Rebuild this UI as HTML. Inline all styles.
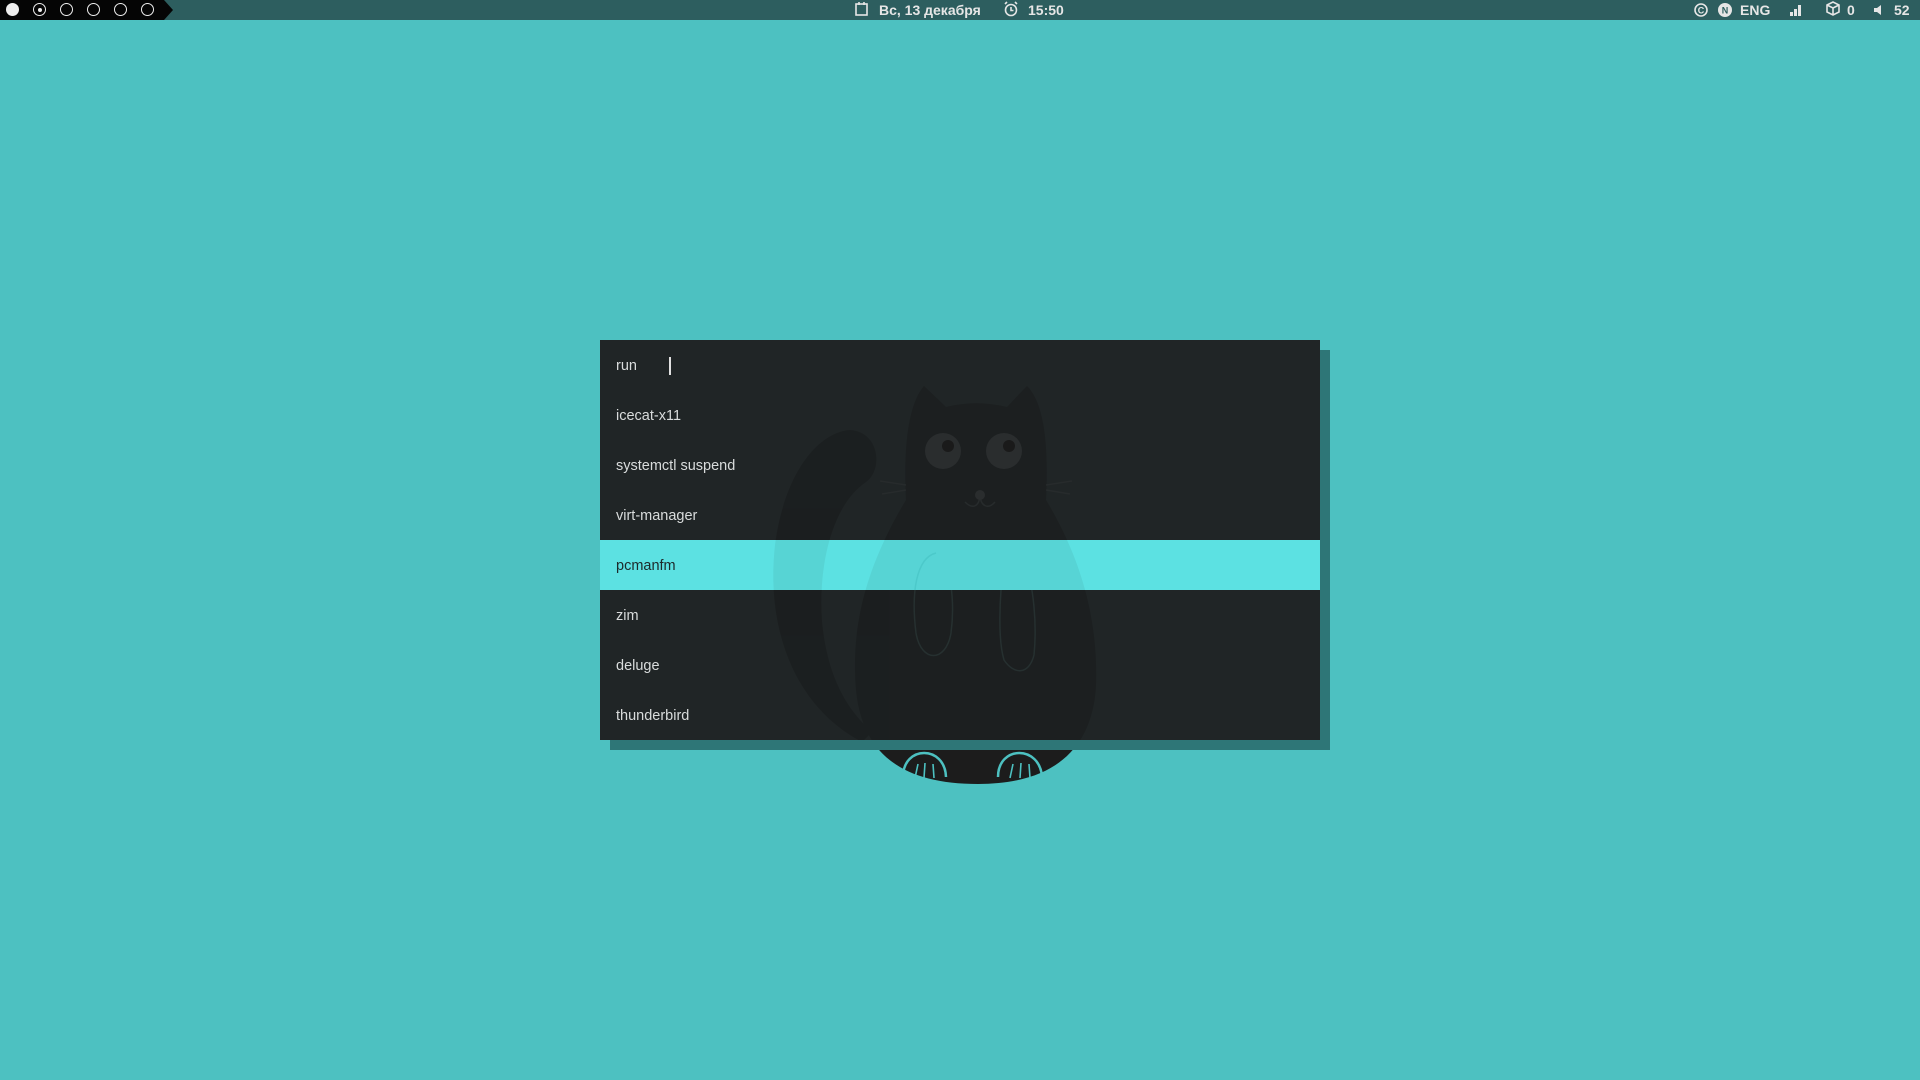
<!DOCTYPE html>
<html><head><meta charset="utf-8"><style>
html,body{margin:0;padding:0;width:1920px;height:1080px;overflow:hidden;background:#4dc1c1;font-family:"Liberation Sans","DejaVu Sans",sans-serif;}
#bar{position:absolute;left:0;top:0;width:1920px;height:20px;background:#2d5e5f;}
#ws{position:absolute;left:0;top:0;height:20px;width:164px;background:#050505;}
#ws:after{content:"";position:absolute;left:164px;top:0;border-left:9px solid #050505;border-top:10px solid transparent;border-bottom:10px solid transparent;}
.c{position:absolute;top:3px;width:11px;height:11px;border:1.6px solid #eee;border-radius:50%;}
.bt{position:absolute;top:0;height:20px;line-height:20px;color:#e6e6e6;font-weight:bold;font-size:14px;}
#box{position:absolute;left:600px;top:340px;width:720px;height:400px;background:#202526;}
#sh{position:absolute;left:610px;top:350px;width:720px;height:400px;background:#2e7677;}
.row{position:absolute;left:0;width:720px;height:50px;line-height:52px;padding-left:16px;box-sizing:border-box;color:#d9dcdc;font-size:14.5px;}
.hl{background:#5ce1e2;color:#1d2a2b;}
svg{position:absolute;left:0;top:0;}
</style></head><body>
<div id="bar">
 <div id="ws">
  <div class="c" style="left:6px;background:#eee;"></div>
  <div class="c" style="left:33px;"><div style="position:absolute;left:3.5px;top:3.5px;width:4px;height:4px;border-radius:50%;background:#eee"></div></div>
  <div class="c" style="left:60px;"></div>
  <div class="c" style="left:87px;"></div>
  <div class="c" style="left:114px;"></div>
  <div class="c" style="left:141px;"></div>
 </div>
 <svg width="1920" height="20" style="left:0;top:0">
  <g fill="none" stroke="#e6e6e6" stroke-width="1.6">
   <rect x="856" y="4" width="11" height="11"/><line x1="859" y1="2" x2="859" y2="5"/><line x1="864" y1="2" x2="864" y2="5"/>
   <circle cx="1011" cy="10" r="5.5"/><path d="M1011 7v3.5h2.5M1005 4l2-2M1017 4l-2-2"/>
   <circle cx="1701" cy="10" r="6"/>
   <path d="M1827 5l6-3 6 3v7l-6 3-6-3zM1827 5l6 3 6-3M1833 8v7"/>
  </g>
  <circle cx="1725" cy="10" r="7" fill="#e6e6e6"/>
  <text x="1701" y="13.5" font-size="9" font-weight="bold" fill="#e6e6e6" text-anchor="middle" font-family="Liberation Sans">C</text>
  <text x="1725" y="13.5" font-size="9" font-weight="bold" fill="#2d5e5f" text-anchor="middle" font-family="Liberation Sans">N</text>
  <g fill="#e6e6e6"><rect x="1790" y="12" width="3" height="4"/><rect x="1794" y="9" width="3" height="7"/><rect x="1798" y="5" width="3" height="11"/></g>
  <path d="M1874 8h3l4-3v10l-4-3h-3z" fill="#e6e6e6"/>
 </svg>
 <div class="bt" style="left:879px;">Вс, 13 декабря</div>
 <div class="bt" style="left:1028px;">15:50</div>
 <div class="bt" style="left:1740px;">ENG</div>
 <div class="bt" style="left:1847px;">0</div>
 <div class="bt" style="left:1894px;">52</div>
</div>

<svg width="1920" height="1080">
 <defs>
  <path id="tail" d="M862 742 C792 705 766 625 775 545 C785 470 820 432 850 430 C880 432 883 470 866 482 C832 505 818 565 822 622 C828 682 850 712 872 732 Z"/>
  <path id="body" d="M906 500 C903 440 910 402 924 386 L946 407 C966 402 986 402 1007 407 L1027 386 C1043 402 1049 440 1046 500 C1082 560 1098 620 1096 685 C1093 745 1058 784 978 784 C900 784 862 752 856 690 C850 620 870 560 906 500 Z"/>
 </defs>
 <g fill="#1c1c1c"><use href="#tail"/><use href="#body"/></g>
 <g fill="none" stroke="#4dc1c1" stroke-width="2.5">
  <path d="M903 777 C903 745 945 745 946 777"/><path d="M998 777 C998 745 1040 745 1042 777"/>
  <path d="M915 778 l3 -14 M924 778 l1 -15 M934 778 l-1 -14 M1010 778 l3 -14 M1020 778 l1 -15 M1030 778 l-1 -14" stroke-width="1.6"/>
 </g>
</svg>
<div id="sh"></div>
<div id="box">
 <div class="row" style="top:0">run<span style="display:inline-block;width:2px;height:18px;background:#e0e0e0;vertical-align:middle;margin-left:32px;"></span></div>
 <div class="row" style="top:50px">icecat-x11</div>
 <div class="row" style="top:100px">systemctl suspend</div>
 <div class="row" style="top:150px">virt-manager</div>
 <div class="row hl" style="top:200px">pcmanfm</div>
 <div class="row" style="top:250px">zim</div>
 <div class="row" style="top:300px">deluge</div>
 <div class="row" style="top:350px">thunderbird</div>
</div>
<svg width="1920" height="1080" style="pointer-events:none">
 <clipPath id="bc1"><rect x="600" y="340" width="720" height="200"/><rect x="600" y="590" width="720" height="150"/></clipPath>
 <clipPath id="bc2"><rect x="600" y="540" width="720" height="50"/></clipPath>
 <g clip-path="url(#bc1)">
  <g fill="#111" opacity="0.28"><use href="#tail"/><use href="#body"/></g>
  <g fill="#2a2d2e"><circle cx="943" cy="451" r="18"/><circle cx="1004" cy="451" r="18"/></g>
  <g fill="#1a1a1a"><circle cx="948" cy="446" r="6"/><circle cx="1009" cy="446" r="6"/></g>
  <g fill="none" stroke="#272b2c" stroke-width="1.5">
   <path d="M965 502 c8 8 14 4 15 -6 c1 10 8 14 15 6"/>
   <path d="M906 485 l-26 -4 M906 490 l-24 4 M1046 485 l26 -4 M1046 490 l24 4"/>
   <path d="M936 553 c-20 5 -25 40 -20 80 c5 30 30 30 35 0 c4 -30 0 -75 -15 -80z" stroke="#263030"/>
   <path d="M1004 560 c-5 40 -6 80 0 100 c10 15 25 15 30 -5 c3 -30 0 -70 -10 -95" stroke="#263030"/>
  </g>
  <circle cx="980" cy="495" r="5" fill="#2a2d2e"/>
 </g>
 <g clip-path="url(#bc2)">
  <g fill="#111" opacity="0.06"><use href="#tail"/><use href="#body"/></g>
  <path d="M936 553 c-20 5 -25 40 -20 80" fill="none" stroke="#4cc9ca" stroke-width="1.5"/>
 </g>
</svg>
</body></html>
